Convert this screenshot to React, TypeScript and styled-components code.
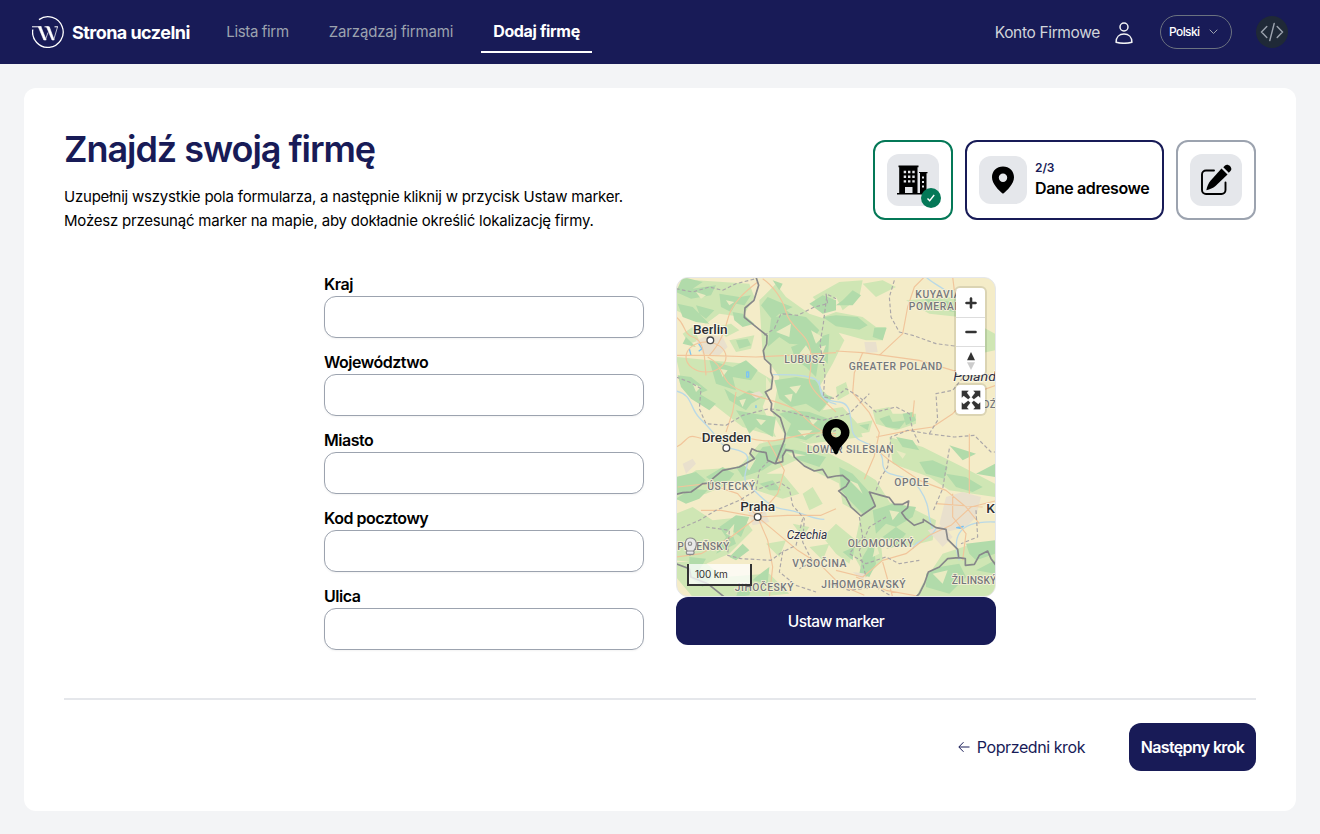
import React from "react";
import styled, { createGlobalStyle } from "styled-components";

const navy = "#181b57";

const GlobalStyle = createGlobalStyle`
  *, *::before, *::after { box-sizing: border-box; }
  body {
    margin: 0;
    min-height: 834px;
    background: #f3f4f6;
    color: #000;
    font-family: Inter, "Open Sans", sans-serif;
    font-size: 16px;
    line-height: 24px;
  }
  svg { display: block; }
`;

/* ---------- header ---------- */

const Header = styled.header`
  height: 64px;
  padding: 0 32px;
  display: flex;
  align-items: center;
  background: ${navy};
  white-space: nowrap;
`;

const Brand = styled.a`
  width: 158px;
  display: flex;
  align-items: center;
  gap: 8px;
  color: #fff;
  font-size: 18px;
  line-height: 26px;
  font-weight: 700;
  letter-spacing: -0.54px;
`;

const BrandName = styled.span`
  padding-top: 2px;
`;

const Nav = styled.nav`
  margin-left: 24px;
  display: flex;
  gap: 16px;
`;

const NavItem = styled.a<{ $width: number; $active?: boolean; $track: number }>`
  width: ${(p) => p.$width}px;
  height: 42px;
  padding-top: ${(p) => (p.$active ? 0 : 2)}px;
  display: flex;
  align-items: center;
  justify-content: center;
  border-bottom: 2px solid ${(p) => (p.$active ? "#fff" : "transparent")};
  color: ${(p) => (p.$active ? "#fff" : "#9ca3af")};
  font-size: ${(p) => (p.$active ? 16 : 15)}px;
  font-weight: ${(p) => (p.$active ? 700 : 400)};
  letter-spacing: ${(p) => p.$track}px;
`;

const Account = styled.div`
  margin-left: auto;
  padding-top: 1px;
  display: flex;
  align-items: center;
  gap: 15px;
  color: #d1d5db;
  font-size: 15.5px;
  letter-spacing: -0.35px;
`;

const Language = styled.button`
  width: 72px;
  height: 34px;
  margin-left: 27px;
  padding: 0 13px 0 8px;
  display: flex;
  align-items: center;
  justify-content: space-between;
  border: 1px solid #6b7280;
  border-radius: 17px;
  background: transparent;
  color: #fff;
  font: 500 12px/16px Inter, sans-serif;
  letter-spacing: -0.6px;
`;

const CodeButton = styled.button`
  width: 32px;
  height: 32px;
  margin-left: 24px;
  padding: 0;
  display: grid;
  place-items: center;
  border: 0;
  border-radius: 50%;
  background: #1f2937;
`;

/* ---------- card ---------- */

const Card = styled.main`
  height: 723px;
  margin: 24px 24px 0;
  padding: 40px;
  border-radius: 12px;
  background: #fff;
`;

const Intro = styled.section`
  display: flex;
  align-items: center;
  justify-content: space-between;
`;

const Title = styled.h1`
  margin: 0 0 15px;
  padding-top: 1px;
  color: ${navy};
  font-size: 36px;
  line-height: 40px;
  font-weight: 600;
  letter-spacing: -1.05px;
`;

const Lead = styled.p`
  margin: 0;
  padding-top: 1px;
  margin-bottom: -1px;
  font-size: 15px;
  letter-spacing: -0.22px;
  white-space: nowrap;
`;

const Steps = styled.ol`
  margin: 0;
  padding: 0;
  display: flex;
  gap: 12px;
  list-style: none;
`;

const Step = styled.li<{ $color: string; $wide?: boolean }>`
  width: ${(p) => (p.$wide ? 199 : 80)}px;
  height: 80px;
  padding: 0 12px;
  display: flex;
  align-items: center;
  gap: 8px;
  border: 2px solid ${(p) => p.$color};
  border-radius: 12px;
`;

const IconTile = styled.span<{ $size: number }>`
  position: relative;
  flex: none;
  width: ${(p) => p.$size}px;
  height: ${(p) => p.$size}px;
  display: grid;
  place-items: center;
  border-radius: 12px;
  background: #e5e7eb;
`;

const DoneBadge = styled.span`
  position: absolute;
  right: -2px;
  bottom: -2px;
  width: 20px;
  height: 20px;
  display: grid;
  place-items: center;
  border-radius: 50%;
  background: #047857;
`;

const StepCount = styled.div`
  color: ${navy};
  font-size: 12px;
  line-height: 16px;
  font-weight: 600;
  letter-spacing: -0.1px;
`;

const StepName = styled.div`
  font-weight: 600;
  letter-spacing: -0.4px;
  white-space: nowrap;
`;

const Columns = styled.section`
  margin-top: 40px;
  display: flex;
  align-items: center;
  justify-content: center;
  gap: 32px;
`;

const Form = styled.form`
  width: 320px;
  display: flex;
  flex-direction: column;
  gap: 12px;
`;

const Field = styled.label`
  display: block;
  font-weight: 600;
  letter-spacing: -0.48px;
`;

const Input = styled.input`
  width: 100%;
  height: 42px;
  padding: 8px 12px;
  display: block;
  border: 1px solid #9ca3af;
  border-radius: 12px;
  background: #fff;
  font: inherit;
  box-shadow: 0 1px 2px rgba(0, 0, 0, 0.05);
`;

const MapColumn = styled.div`
  width: 320px;
`;

const MapFrame = styled.div`
  position: relative;
  height: 320px;
  overflow: hidden;
  border: 1px solid #e5e7eb;
  border-radius: 12px;
  background: #f4ecc8;
`;

const MapControls = styled.div`
  position: absolute;
  top: 10px;
  right: 10px;
  display: flex;
  flex-direction: column;
  gap: 10px;
`;

const ControlGroup = styled.div`
  width: 29px;
  border-radius: 4px;
  background: #fff;
  box-shadow: 0 0 0 2px rgba(0, 0, 0, 0.1);
`;

const ControlButton = styled.button`
  width: 29px;
  height: 29px;
  padding: 0;
  display: grid;
  place-items: center;
  border: 0;
  background: transparent;
  & + & {
    border-top: 1px solid #ddd;
  }
`;

const MapPin = styled.span`
  position: absolute;
  left: 145px;
  top: 140px;
`;

const ScaleBar = styled.div`
  position: absolute;
  left: 10px;
  bottom: 10px;
  width: 65px;
  height: 22px;
  padding: 1px 6px;
  border: 2px solid #333;
  border-top: 0;
  background: rgba(255, 255, 255, 0.75);
  color: #333;
  font-size: 10px;
  line-height: 18px;
  letter-spacing: -0.2px;
`;

const MarkerButton = styled.button`
  width: 100%;
  height: 48px;
  padding: 2px 0 0;
  display: block;
  border: 0;
  border-radius: 12px;
  background: ${navy};
  color: #fff;
  font: 500 15.5px/24px Inter, sans-serif;
  letter-spacing: -0.55px;
`;

const Divider = styled.hr`
  height: 2px;
  margin: 48px 0 23px;
  border: 0;
  background: #e5e7eb;
`;

const Footer = styled.footer`
  display: flex;
  align-items: center;
  justify-content: flex-end;
  gap: 44px;
  white-space: nowrap;
`;

const BackButton = styled.button`
  padding: 0;
  display: flex;
  align-items: center;
  gap: 7px;
  border: 0;
  background: none;
  color: ${navy};
  font: 400 16px/24px Inter, sans-serif;
  letter-spacing: -0.42px;
`;

const NextButton = styled.button`
  width: 127px;
  height: 48px;
  padding: 0;
  border: 0;
  border-radius: 12px;
  background: ${navy};
  color: #fff;
  font: 600 16px/24px Inter, sans-serif;
  letter-spacing: -0.65px;
`;

/* ---------- icons ---------- */

const Logo = () => (
  <svg width="32" height="32" viewBox="0 0 32 32" fill="none" stroke="#fff">
    <path d="M7 3.600A15.300 15.300 0 1 1 .8 13.500" strokeWidth="1.300" />
    <path d="M0 10.800h9.500M12.500 10.800h4M22.500 10.800h3.500" strokeWidth="1" />
    <path d="M6.300 10.800 11.800 24h2.400L9 10.800zM14.500 10.800 20 24h2.200L17.300 10.800z" fill="#fff" strokeWidth=".6" />
    <path d="M13.500 23.500 16 16.500M21.800 23.500l3.700-12.500" strokeWidth=".7" />
  </svg>
);

const UserIcon = () => (
  <svg width="18" height="22" viewBox="0 0 18 22" fill="none" stroke="#f3f4f6" strokeWidth="1.500">
    <circle cx="9" cy="5" r="4" />
    <path d="M1.100 20.200c0-5 3.200-8.200 7.900-8.200s7.900 3.200 7.900 8.200c-4.400 1.200-11.400 1.200-15.800 0z" strokeLinejoin="round" />
  </svg>
);

const Chevron = () => (
  <svg width="9" height="6" viewBox="0 0 9 6" fill="none" stroke="#9ca3af">
    <path d="m.7.7 3.800 3.800L8.300.7" />
  </svg>
);

const CodeIcon = () => (
  <svg width="24" height="20" viewBox="0 0 24 20" fill="none" stroke="#9ca3af" strokeWidth="1.400" strokeLinecap="round">
    <path d="M6.800 4.500 1.500 10l5.300 5.500M17.200 4.500l5.300 5.500-5.300 5.500M14.200 1.500 9.800 18.500" />
  </svg>
);

const BuildingIcon = () => (
  <svg width="32" height="32" viewBox="0 0 32 32">
    <path
      fillRule="evenodd"
      d="M1.500 1.500h20v1.700h-1V29H23V9h-1V8h8.500v1.200h-1V29H31v1.500H0V29h2.200V3.200h-.7zM8 23v6h7.500v-6zM6.700 6.800v2.400h2.400V6.800zm4.300 0v2.400h2.400V6.800zm4.300 0v2.400h2.400V6.800zm-8.600 4.700v2.400h2.400v-2.400zm4.300 0v2.400h2.400v-2.400zm4.300 0v2.400h2.400v-2.400zm-8.600 4.700v2.400h2.400v-2.400zm4.300 0v2.400h2.400v-2.400zm4.300 0v2.400h2.400v-2.400zM25 12.500v2h2v-2zm0 4.500v2h2v-2zm0 4.500v2h2v-2z"
    />
  </svg>
);

const CheckIcon = () => (
  <svg width="10" height="10" viewBox="0 0 10 10" fill="none" stroke="#fff" strokeWidth="1.400">
    <path d="m1.500 5.500 2.200 2.300L8.200 2" />
  </svg>
);

const PinIcon = () => (
  <svg width="24" height="28" viewBox="0 0 24 28">
    <path
      fillRule="evenodd"
      d="M12 .5C5.700.5 1 5 1 11.200 1 18 8 24.500 12 27.800 16 24.500 23 18 23 11.200 23 5 18.300.5 12 .5zm0 7a4.200 4.200 0 1 1 0 8.400 4.200 4.200 0 0 1 0-8.400z"
    />
  </svg>
);

const EditIcon = () => (
  <svg width="32" height="32" viewBox="0 0 32 32">
    <path
      d="M14 6.500H6c-2.200 0-4 1.800-4 4v15.500c0 2.200 1.800 4 4 4h15.500c2.200 0 4-1.800 4-4V18.500"
      fill="none"
      stroke="#000"
      strokeWidth="1.900"
      strokeLinecap="round"
    />
    <path d="m21.500 4.500 6 6-12 11.500c-2.500 2.300-5.500 3.300-9.200 4.200.9-3.700 2-6.900 4.200-9.400z" />
    <path d="M23.300 3.200 25 1.500c3-3 8.500 2.500 5.500 5.500l-1.700 1.700z" />
  </svg>
);

const ArrowLeft = () => (
  <svg width="12" height="12" viewBox="0 0 12 12" fill="none" stroke={navy}>
    <path d="M11.500 6H1M5.500 1.200.8 6l4.700 4.800" />
  </svg>
);

/* ---------- map ---------- */

const lightWoods = [
  "M0 40 60 10 140 15 220 20 235 60 200 120 130 110 90 140 40 120 0 100z",
  "M250 70 300 20 330 60 400 110 460 130 505 190 470 260 430 330 465 365 440 400 500 390 545 440 560 480 480 490 400 500 330 480 290 410 310 300 260 230z",
  "M0 240 100 250 210 260 290 310 260 390 300 480 200 450 110 380 20 330z",
  "M440 120 480 105 560 120 600 150 630 150 620 190 570 190 480 165z",
  "M490 15 560 10 550 60 500 100 480 60 440 90 410 60zM560 20 620 10 660 30 600 60z",
  "M590 400 640 390 650 410 720 410 720 440 660 460 600 440z",
  "M690 70 840 60 850 120 760 110zM920 150 957 170 957 220 910 230z",
  "M0 620 60 580 190 570 250 500 340 480 440 520 520 560 600 610 650 690 590 700 530 640 410 580 360 550 250 600 160 620 90 650 0 670z",
  "M0 710 50 690 110 730 200 720 230 760 160 830 90 860 0 850z",
  "M0 855 80 850 140 900 280 890 340 950 240 960 50 960 0 900z",
  "M480 570 560 610 610 670 700 690 780 730 770 790 690 810 610 780 570 720 500 680z",
  "M640 480 740 510 860 570 957 620 957 660 820 640 760 600 650 560z",
  "M560 690 610 750 620 850 570 900 530 830zM740 920 800 830 890 800 957 830 957 960 720 960z",
  "M440 780 480 740 540 790 520 860 480 830zM820 890 900 860 957 900 920 960z",
  "M120 150 165 140 190 160 150 180zM20 170 50 150 70 190 40 200zM160 190 235 175 225 215 180 225zM225 590 320 590 370 650 320 665 240 640zM380 650 410 630 440 680 400 700z",
  "M350 740 400 750 380 780zM270 800 330 790 310 840zM400 810 460 800 440 850zM540 440 590 430 580 465 550 470zM480 330 510 315 520 350 485 370z",
];

const darkWoods = [
  "M20 0 80 15 50 35 120 25 105 55 45 65 0 45z",
  "M130 50 190 60 225 55 205 85 180 80 165 105 135 90z",
  "M5 80 50 90 100 140 60 135 20 120z",
  "M170 105 200 110 235 140 200 150 175 130z",
  "M60 85 115 100 90 125 70 110z",
  "M255 85 275 60 310 75 350 90 330 100 360 120 310 110 290 130z",
  "M285 125 330 110 390 120 430 160 400 205 340 200 310 180 275 210z",
  "M400 80 440 55 480 70 480 100 440 110z",
  "M400 190 460 170 455 260 430 235 420 300 390 270 360 250 345 210z",
  "M295 310 360 300 420 310 440 350 470 360 430 405 390 380 345 390 310 365z",
  "M100 250 170 270 210 250 245 280 225 310 170 300 180 340 120 320z",
  "M5 295 45 300 95 340 70 350 120 380 100 400 45 365 15 330z",
  "M145 335 185 360 220 340 260 360 225 380 210 400 160 370z",
  "M180 400 235 410 300 420 290 480 240 450 220 470 200 430z",
  "M310 410 345 400 400 405 470 430 450 455 430 465 390 490 330 475 345 440z",
  "M440 120 480 115 545 120 575 145 550 158 480 148z",
  "M595 152 632 152 620 190 590 180z",
  "M480 85 500 70 530 40 555 55 530 85z",
  "M610 425 640 415 650 435 690 430 670 455 630 450z",
  "M680 410 710 405 720 430 690 445z",
  "M550 445 580 440 575 460z",
  "M745 65 830 75 835 105 775 95z",
  "M0 600 60 585 90 610 50 640 0 650z",
  "M90 600 140 570 175 590 160 610 120 620z",
  "M180 570 230 550 260 510 330 500 320 540 260 580 200 600z",
  "M310 510 365 520 450 540 430 570 370 550z",
  "M0 665 45 635 95 640 70 665 30 680z",
  "M250 620 290 610 315 640 280 640z",
  "M130 750 180 715 220 720 195 780 165 760 180 800 120 830 150 780z",
  "M160 840 200 800 220 820 180 850z",
  "M40 840 90 845 70 880 110 900 80 930 40 900z",
  "M240 900 280 870 275 920 230 910z",
  "M190 930 230 920 220 955 180 960z",
  "M490 570 530 590 575 640 600 690 560 710 520 670 495 640z",
  "M590 700 650 680 720 690 710 720 660 750 630 740 600 770z",
  "M620 780 660 750 690 770 665 800z",
  "M660 480 710 490 730 520 680 510zM730 555 770 550 815 570 805 605 750 590z",
  "M810 590 870 600 920 630 890 645 840 630z",
  "M820 505 900 530 860 550zM900 590 957 560 957 600z",
  "M560 840 590 790 600 860 580 900 550 890z",
  "M750 890 790 870 850 860 870 900 820 950 750 930z",
  "M870 800 957 790 957 830 900 850 880 830z",
  "M900 880 957 850 957 890z",
  "M630 815 670 790 675 805zM500 825 535 810 530 850z",
  "M180 190 215 185 225 205 190 215zM290 10 320 20 310 40zM60 210 20 200 30 180z",
];

const clearings = [
  "M300 165 345 140 340 180zM370 230 390 205 410 235zM340 330 375 325 360 350zM405 160 440 180 420 200z",
  "M60 45 90 55 75 65zM150 70 175 75 160 85zM130 275 155 280 140 300zM50 320 75 330 60 345zM190 370 210 365 200 390z",
  "M365 460 410 460 385 480zM240 425 270 430 255 445zM200 560 240 545 220 580zM330 525 390 535 350 540z",
  "M520 610 545 620 560 650zM640 700 670 705 650 730zM770 890 815 880 800 920zM150 770 175 740 170 780z",
  "M430 210 450 205 440 230zM325 355 350 350 345 375zM400 425 425 430 410 445zM270 300 290 330 270 360zM660 520 690 530 680 545zM600 800 610 830 590 840z",
];

const roads = [
  "M0 235h90l150 5 100-5 140-8",
  "M100 235C150 180 150 130 165 100S200 50 245 15",
  "M95 240c40 20 40 50 60 75s80 40 130 55 70 20 110 60 60 35 85 50",
  "M260 5c30 20 60 60 70 100s50 60 65 90 10 80 5 110 60 80 80 100",
  "M0 120c30 20 20 50 50 60s30 40 35 55l5 60M180 345l-10 60-20 60",
  "M30 240a60 45 0 1 1 120 0 60 45 0 1 1-120 0",
  "M480 222l80 5 110 15 60 8 100 30 127 15",
  "M610 235l70-65 15-80 20-60 30-30",
  "M560 227l-25 60-5 60 50 60 30 60-15 70-30 70",
  "M600 480l100-20 70-10 60-40 60-60 70-25M830 0l5 40M715 370l-5 50",
  "M580 500l60 50 90 60 80 30 60 50 40 50",
  "M245 720l90-5 100 0 45-20M245 720l60-70 20-70-50-90M245 720l-80 60-90 50-75 10",
  "M245 720l-60-70-90-30-90 10M245 720l60 50 60 50 70 45 60 60 70 30",
  "M245 720l30 70 15 80-10 90M245 720l-110-20-60 0",
  "M480 880l80 20 60-50 70-20 70-55 65-30 60-55 80-20",
  "M830 650l0 70 40 50-10 80M620 855l30 105M540 900l90 40 110 20M780 680l140 10M880 470l0 180",
  "M0 510c30-10 30-40 60-30s80 10 110 0 70 20 130 10 100-30 180-20",
];

const regionLines = [
  "M0 35l50 10 50-15 40 10 40-20 60-15",
  "M265 175l30-20 20-45 50 5 50-25 40-10-5-30 30 15M452 60l-10 80-10 60 15 90-5 70 38 5",
  "M0 300l40 15 35 20-5 60 20 45 60 5 50-30 80-20 60 10 100 25 80-20 60-60",
  "M655 10l-15 50 5 60 25 45 40 10 70 25 80 10 57 45",
  "M480 360l30-25 40 25 50 45 60-15 40 20 10 50 20 40M760 470l25-40-5-80 50-10 40-50",
  "M600 640l15-40 20-30 10-90 50-20 60 10 80 10 60-5 50 50 12 0M820 515l-10 60-10 60-30 70",
  "M0 760l70-30 50-30 70-30 50-30 10-60 30-30M250 635l60-20 30 20 10 50 35 40-5 70 30 60-40 20",
  "M380 725l-20 80-40 20-10 60 50 40 60 20M90 750l70 10-5 75 40 10 90 5 40-30",
  "M550 720l10 60-40 50 50 30 60-20 40 20 60-10M900 700l5 80-50 20",
  "M460 920l60 20 80-10 50 30M420 480l60-20M630 720l-50 30-30 70 20 80",
];

const borders = [
  "M240 0 248 25 234 70 207 93 205 121 273 176 272 201 262 221 266 246 284 263 284 285 290 300 286 335 268 345 287 380 285 400 313 422 328 470 325 490 298 560",
  "M0 652 20 647 45 645 80 620 105 618 110 605 140 580 190 570 235 545 222 530 228 515 242 522 270 527 275 550 298 560 320 554 320 537 330 519 350 522 355 540 385 567 415 582 440 577 455 602 480 597",
  "M480 597 500 595 520 612 510 628 488 642 510 662 525 690 555 717 598 687 590 668 580 645 615 655 640 662 655 682 680 682 698 672 695 692 677 707 690 725 715 745 742 735 742 727 780 752 810 757 815 787 845 817 848 842 868 845 868 865 895 862 910 835 935 822 945 845 960 865",
  "M848 842 815 845 790 870 757 885 745 920 730 950 720 960M0 860 40 875 45 900 95 920 145 960",
];

const rivers = [
  "M290 293c60 0 90 0 120 10s20 50 40 65 30 10 30 15",
  "M0 342c50 10 40 50 70 80s40 40 60 70 60 20 80 40-20 70 5 90 60 70 110 75 80 30 120 30",
  "M430 310c0 60 20 60 60 65s30 50 40 90 90 30 90 90 70 20 110 80 20 80 40 120",
  "M780 755c-20 40-60 30-70 60M850 850c-20-60-15-120 107-115M750 0c20 20 50 30 70 50",
];

type PlaceProps = { x: number; y: number; w: number; children: string };

const Region = ({ x, y, w, children }: PlaceProps) => (
  <text x={x} y={y} textLength={w} fontSize="31" fontWeight="500" fill="#75787c" stroke="#f7f1d8" strokeWidth="5" paintOrder="stroke">
    {children}
  </text>
);

const City = ({ x, y, w, children }: PlaceProps) => (
  <text x={x} y={y} textLength={w} fontSize="41" fontWeight="500" fill="#2d2f33" stroke="#fbf8ea" strokeWidth="6" paintOrder="stroke">
    {children}
  </text>
);

const Country = ({ x, y, w, children }: PlaceProps) => (
  <text x={x} y={y} textLength={w} lengthAdjust="spacingAndGlyphs" fontSize="40" fontStyle="italic" fill="#2d2f45" stroke="#fbf8ea" strokeWidth="5" paintOrder="stroke">
    {children}
  </text>
);

const MapDrawing = () => (
  <svg width="320" height="320" viewBox="3 3 960 960" fontFamily="Roboto, sans-serif" fill="none" strokeLinejoin="round">
    <path d={lightWoods.join("")} fill="#cfe6b4" />
    <path d={darkWoods.join("")} fill="#b1dbaa" />
    <path d={clearings.join("")} fill="#e9ebc2" />
    <path d="M60 190 100 175 140 180 155 210 130 235 80 230zM222 350 250 343 262 355 240 365zM565 195 600 195 605 225 570 228zM215 700 265 695 280 735 230 745zM810 660 860 645 915 660 900 720 870 750 810 765 790 740zM755 760 800 745 830 780 800 810zM20 560 50 545 60 560 30 590zM530 885 570 890 560 910z" fill="#e9e0cd" />
    <path d={rivers.join("")} stroke="#bad9e6" strokeWidth="4" />
    <path d="M68 200l10 15-10 8M40 215l5 20M212 285h6v15h-6zM240 385v8M842 752l20-4-10 6z" stroke="#7cc4f2" strokeWidth="4" />
    <path d={roads.join("")} stroke="#f1c59b" strokeWidth="3.500" />
    <path d={regionLines.join("")} stroke="#aba7a8" strokeWidth="3.500" strokeDasharray="11 7" />
    <path d={borders.join("")} stroke="#87878a" strokeWidth="5" />
    <g fill="#fff" stroke="#4b4b4b" strokeWidth="4">
      <circle cx="103" cy="190" r="10" />
      <circle cx="151" cy="513" r="10" />
      <circle cx="245" cy="720" r="10" />
    </g>
    <City x={51} y={172} w={104}>Berlin</City>
    <City x={77} y={496} w={148}>Dresden</City>
    <City x={193} y={703} w={104}>Praha</City>
    <City x={931} y={709} w={27}>K</City>
    <Country x={332} y={787} w={122}>Czechia</Country>
    <Country x={832} y={311} w={128}>Poland</Country>
    <Region x={325} y={259} w={121}>LUBUSZ</Region>
    <Region x={518} y={280} w={281}>GREATER POLAND</Region>
    <Region x={718} y={62} w={136}>KUYAVIA</Region>
    <Region x={698} y={98} w={170}>POMERANI</Region>
    <Region x={920} y={392} w={40}>DŹ</Region>
    <Region x={392} y={529} w={261}>LOWER SILESIAN</Region>
    <Region x={655} y={628} w={103}>OPOLE</Region>
    <Region x={94} y={639} w={143}>ÚSTECKÝ</Region>
    <Region x={4} y={820} w={156}>PLZEŇSKÝ</Region>
    <Region x={515} y={811} w={198}>OLOMOUCKÝ</Region>
    <Region x={349} y={870} w={162}>VYSOČINA</Region>
    <Region x={176} y={942} w={177}>JIHOČESKÝ</Region>
    <Region x={436} y={934} w={253}>JIHOMORAVSKÝ</Region>
    <Region x={827} y={921} w={134}>ŽILINSKÝ</Region>
    <g fill="#e8e8e8" stroke="#8d8d8d" strokeWidth="3.500">
      <path d="M42 834C20 810 26 783 42 783s34 20 0 51z" />
      <circle cx="42" cy="800" r="5" />
      <rect x="31" y="822" width="23" height="10" rx="4" />
    </g>
  </svg>
);

const PlusIcon = () => (
  <svg width="12" height="12" viewBox="0 0 12 12" stroke="#333" strokeWidth="2.600" strokeLinecap="round">
    <path d="M1.500 6h9M6 1.500v9" />
  </svg>
);

const MinusIcon = () => (
  <svg width="12" height="12" viewBox="0 0 12 12" stroke="#333" strokeWidth="2.600" strokeLinecap="round">
    <path d="M1.500 6h9" />
  </svg>
);

const CompassIcon = () => (
  <svg width="10" height="20" viewBox="0 0 10 20">
    <path d="M1 9.200h8L5 1z" fill="#333" />
    <path d="M1 11.200h8L5 19z" fill="#ccc" />
  </svg>
);

const FullscreenIcon = () => (
  <svg width="20" height="20" viewBox="0 0 20 20" fill="#333" stroke="#333">
    <path
      d="M.8 7.500V.8h6.700L5.800 2.700 9.200 7.200 7.200 9.200 2.700 5.800zM12.500.8h6.700v6.700l-1.900-1.700-4.500 3.400-2-2 3.400-4.500zM19.200 12.500v6.700h-6.700l1.700-1.900-3.400-4.500 2-2 4.500 3.400zM7.500 19.200H.8v-6.700l1.900 1.700 4.500-3.400 2 2-3.400 4.500z"
      strokeWidth=".2"
    />
  </svg>
);

const fields = ["Kraj", "Województwo", "Miasto", "Kod pocztowy", "Ulica"];

export default function App() {
  return (
    <>
      <GlobalStyle />
      <Header>
        <Brand>
          <Logo />
          <BrandName>Strona uczelni</BrandName>
        </Brand>
        <Nav>
          <NavItem $width={87} $track={-0.35}>Lista firm</NavItem>
          <NavItem $width={148} $track={-0.18}>Zarządzaj firmami</NavItem>
          <NavItem $width={111} $track={-0.35} $active>Dodaj firmę</NavItem>
        </Nav>
        <Account>
          Konto Firmowe
          <UserIcon />
        </Account>
        <Language>
          Polski
          <Chevron />
        </Language>
        <CodeButton aria-label="Kod">
          <CodeIcon />
        </CodeButton>
      </Header>
      <Card>
        <Intro>
          <div>
            <Title>Znajdź swoją firmę</Title>
            <Lead>
              Uzupełnij wszystkie pola formularza, a następnie kliknij w przycisk Ustaw marker.
              <br />
              Możesz przesunąć marker na mapie, aby dokładnie określić lokalizację firmy.
            </Lead>
          </div>
          <Steps>
            <Step $color="#047857">
              <IconTile $size={52}>
                <BuildingIcon />
                <DoneBadge>
                  <CheckIcon />
                </DoneBadge>
              </IconTile>
            </Step>
            <Step $color={navy} $wide>
              <IconTile $size={48}>
                <PinIcon />
              </IconTile>
              <div>
                <StepCount>2/3</StepCount>
                <StepName>Dane adresowe</StepName>
              </div>
            </Step>
            <Step $color="#9ca3af">
              <IconTile $size={52}>
                <EditIcon />
              </IconTile>
            </Step>
          </Steps>
        </Intro>
        <Columns>
          <Form>
            {fields.map((name) => (
              <Field key={name}>
                {name}
                <Input />
              </Field>
            ))}
          </Form>
          <MapColumn>
            <MapFrame>
              <MapDrawing />
              <MapPin>
                <svg width="28" height="38" viewBox="0 0 28 38">
                  <path
                    fillRule="evenodd"
                    d="M14 1a13.500 13.500 0 0 1 13.500 13.500c0 8.500-9.500 12-11.500 20-.7 2.500-3.300 2.500-4 0C10 26.500.5 23 .5 14.500A13.500 13.500 0 0 1 14 1zm0 8.500a5 5 0 1 0 0 10 5 5 0 0 0 0-10z"
                  />
                </svg>
              </MapPin>
              <MapControls>
                <ControlGroup>
                  <ControlButton aria-label="+"><PlusIcon /></ControlButton>
                  <ControlButton aria-label="-"><MinusIcon /></ControlButton>
                  <ControlButton aria-label="N"><CompassIcon /></ControlButton>
                </ControlGroup>
                <ControlGroup>
                  <ControlButton aria-label="[ ]"><FullscreenIcon /></ControlButton>
                </ControlGroup>
              </MapControls>
              <ScaleBar>100 km</ScaleBar>
            </MapFrame>
            <MarkerButton>Ustaw marker</MarkerButton>
          </MapColumn>
        </Columns>
        <Divider />
        <Footer>
          <BackButton>
            <ArrowLeft />
            Poprzedni krok
          </BackButton>
          <NextButton>Następny krok</NextButton>
        </Footer>
      </Card>
    </>
  );
}
